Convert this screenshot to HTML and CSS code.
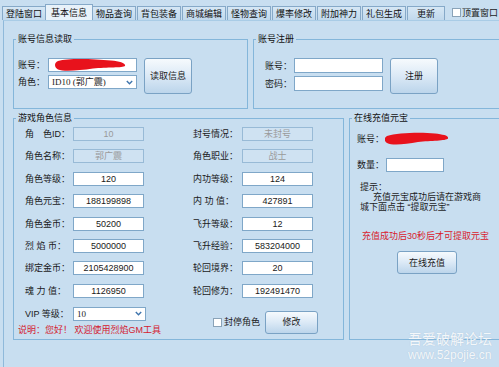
FILE: index.html
```html
<!DOCTYPE html>
<html lang="zh">
<head>
<meta charset="utf-8">
<title>GM工具</title>
<link rel="stylesheet" href="styles.css">
</head>
<body>
<div class="tabs">
  <div class="tab">登陆窗口</div>
  <div class="tab sel">基本信息</div>
  <div class="tab">物品查询</div>
  <div class="tab">背包装备</div>
  <div class="tab">商城编辑</div>
  <div class="tab">怪物查询</div>
  <div class="tab">爆率修改</div>
  <div class="tab">附加神力</div>
  <div class="tab">礼包生成</div>
  <div class="tab short">更新</div>
  <label class="chk top-chk"><span class="cb"></span>顶置窗口</label>
</div>

<div class="pane">
  <div class="row1">
    <div class="group">
      <div class="gtitle">账号信息读取</div>
      <div class="gbody g1">
        <div class="fields">
          <div class="frow"><span class="lbl l30">账号：</span><span class="input w89"><svg class="scribble" width="72" height="14" viewBox="0 0 72 14"><path d="M3,3 C14,0 38,1 56,2.5 C65,3.5 71,5 70,8 C68,10 52,9 38,10.5 C24,12.5 9,14 3,11.5 C-1,9.5 -1,4.5 3,3 Z"/></svg></span></div>
          <div class="frow"><span class="lbl l30">角色：</span><span class="combo w89">ID10 (郭广震)<svg class="chev" width="7" height="5" viewBox="0 0 7 5"><polyline points="0.8,1 3.5,3.8 6.2,1"/></svg></span></div>
        </div>
        <button class="btn b48">读取信息</button>
      </div>
    </div>
    <div class="group">
      <div class="gtitle">账号注册</div>
      <div class="gbody g2">
        <div class="fields">
          <div class="frow"><span class="lbl l29">账号：</span><span class="input w89 h15"></span></div>
          <div class="frow"><span class="lbl l29">密码：</span><span class="input w89 h15"></span></div>
        </div>
        <button class="btn b48">注册</button>
      </div>
    </div>
  </div>

  <div class="row2">
    <div class="group">
      <div class="gtitle">游戏角色信息</div>
      <div class="info">
        <span class="lbl">角　色ID：</span><span class="input dis">10</span><span></span>
        <span class="lbl">封号情况：</span><span class="input dis">未封号</span>

        <span class="lbl">角色名称：</span><span class="input dis">郭广震</span><span></span>
        <span class="lbl">角色职业：</span><span class="input dis">战士</span>

        <span class="lbl">角色等级：</span><span class="input">120</span><span></span>
        <span class="lbl">内功等级：</span><span class="input">124</span>

        <span class="lbl">角色元宝：</span><span class="input">188199898</span><span></span>
        <span class="lbl">内 功 值：</span><span class="input">427891</span>

        <span class="lbl">角色金币：</span><span class="input">50200</span><span></span>
        <span class="lbl">飞升等级：</span><span class="input">12</span>

        <span class="lbl">烈 焰 币：</span><span class="input">5000000</span><span></span>
        <span class="lbl">飞升经验：</span><span class="input">583204000</span>

        <span class="lbl">绑定金币：</span><span class="input">2105428900</span><span></span>
        <span class="lbl">轮回境界：</span><span class="input">20</span>

        <span class="lbl">魂 力 值：</span><span class="input">1126950</span><span></span>
        <span class="lbl">轮回修为：</span><span class="input">192491470</span>
      </div>
      <div class="bottom">
        <div class="bleft">
          <div class="frow vip"><span class="lbl l48">VIP 等级：</span><span class="combo w73">10<svg class="chev" width="7" height="5" viewBox="0 0 7 5"><polyline points="0.8,1 3.5,3.8 6.2,1"/></svg></span></div>
          <div class="note">说明：您好！ 欢迎使用烈焰GM工具</div>
        </div>
        <div class="bright">
          <label class="chk"><span class="cb"></span>封停角色</label>
          <button class="btn b53">修改</button>
        </div>
      </div>
    </div>

    <div class="group">
      <div class="gtitle">在线充值元宝</div>
      <div class="g4">
        <div class="frow r1"><span class="lbl l28">账号：</span><svg class="scribble" width="64" height="14" viewBox="0 0 64 14"><path d="M2,4 C12,1 34,0 50,1.5 C58,2.5 64,3.5 63,6.5 C61,9 46,8.5 33,10 C21,12 8,14 2,11 C-1,9 -1,5.5 2,4 Z"/></svg></div>
        <div class="frow r2"><span class="lbl l29">数量：</span><span class="input w58"></span></div>
        <div class="tip">提示：<br><span class="ind">充值元宝成功后请在游戏商</span><br>城下面点击 “提取元宝”</div>
        <div class="red">充值成功后30秒后才可提取元宝</div>
        <button class="btn b60">在线充值</button>
      </div>
    </div>
  </div>
</div>

<div class="wm">
  <div class="wm1">吾爱破解论坛</div>
  <div class="wm2">www.52pojie.cn</div>
</div>
</body>
</html>
```

FILE: styles.css
```css
* { box-sizing: border-box; }
html, body { margin: 0; padding: 0; }
body {
  width: 499px;
  height: 367px;
  overflow: hidden;
  position: relative;
  background: #c8def0;
  font-family: "Liberation Sans", "Noto Sans CJK SC", sans-serif;
  font-size: 9px;
  color: #1c1c1c;
}

/* tabs */
.tabs {
  display: flex;
  align-items: flex-end;
  height: 20px;
  padding-left: 2px;
}
.tab {
  flex: none;
  width: 44px;
  height: 14px;
  margin-right: 1px;
  border: 1px solid #86a9c8;
  border-bottom: none;
  background: linear-gradient(#d6e7f5, #c0d8ec);
  display: flex;
  align-items: center;
  justify-content: center;
  line-height: 12px;
  color: #111;
  white-space: nowrap;
}
.tab.sel {
  width: 48px;
  height: 16px;
  margin: 0 -1px 0 -2px;
  background: #e8f2fa;
  position: relative;
  z-index: 1;
}
.tab.short { width: 38px; }

.chk {
  display: flex;
  align-items: center;
  gap: 2px;
  line-height: 12px;
  white-space: nowrap;
  flex: none;
}
.top-chk { margin-left: 6px; height: 15px; gap: 1px; }
.cb {
  flex: none;
  width: 9px;
  height: 9px;
  background: #fff;
  border: 1px solid #8aa3b8;
}

/* pane */
.pane {
  margin-left: 3px;
  height: 347px;
  border-left: 1px solid #8fb9da;
  border-top: 1px solid #a9cce6;
  padding: 18px 0 0 9px;
}
.row1 {
  display: grid;
  grid-template-columns: 235px 250px;
  column-gap: 5px;
  height: 70px;
}
.row2 {
  display: grid;
  grid-template-columns: 331px 160px;
  column-gap: 5px;
  height: 222px;
  margin-top: 9px;
}
.group {
  border: 1px solid #84b6da;
}
.gtitle {
  width: fit-content;
  height: 12px;
  margin: -7px 0 0 2px;
  padding: 0 2px;
  line-height: 12px;
  background: #c8def0;
  color: #111;
}

/* generic fields */
.frow { display: flex; align-items: center; }
.fields { display: flex; flex-direction: column; gap: 3px; }
.lbl { line-height: 12px; white-space: nowrap; color: #1a1a1a; }
.l28 { width: 28px; }
.l29 { width: 29px; }
.l30 { width: 30px; }
.l48 { width: 48px; }
.input {
  display: flex;
  align-items: center;
  justify-content: center;
  height: 14px;
  background: #fff;
  border: 1px solid #7fa7c8;
  line-height: 12px;
  color: #1a1a1a;
  overflow: visible;
}
.input.dis {
  background: #cfe2f2;
  border-color: #98bad6;
  color: #9a9a9a;
}
.h15 { height: 15px; }
.w58 { width: 58px; }
.w73 { width: 73px; }
.w89 { width: 89px; }
.combo {
  display: flex;
  align-items: center;
  justify-content: space-between;
  height: 14px;
  padding: 0 3px 0 3px;
  background: #fff;
  border: 1px solid #7fa7c8;
  line-height: 12px;
  font-family: "Liberation Serif", "Noto Sans CJK SC", serif;
}
.chev polyline {
  fill: none;
  stroke: #3f75ad;
  stroke-width: 1.4;
}
.scribble path { fill: #e8121c; }
.input .scribble { margin-left: -4px; flex: none; }

.btn {
  display: flex;
  align-items: center;
  justify-content: center;
  padding: 0;
  border: 1px solid #7aa2c4;
  border-radius: 3px;
  background: linear-gradient(#f6fafd, #dbe9f6 50%, #bcd5eb);
  font: inherit;
  color: #1a1a1a;
  line-height: 12px;
}
.b48 { width: 48px; height: 36px; }
.b53 { width: 53px; height: 23px; }
.b60 { width: 60px; height: 23px; }

/* group 1/2 bodies */
.gbody {
  display: flex;
  align-items: flex-start;
  margin-top: 13px;
}
.gbody .btn { margin-left: 7px; }
.g1 { padding-left: 4px; }
.g2 { padding-left: 11px; }

/* game role info */
.info {
  display: grid;
  grid-template-columns: 48px 71px 49px 49px 71px;
  grid-auto-rows: 14px;
  row-gap: 8.4px;
  align-items: center;
  margin-top: 3px;
  padding-left: 11px;
}
.bottom {
  display: flex;
  align-items: flex-start;
  margin-top: 9px;
  padding-left: 4px;
}
.bleft { width: 195px; }
.vip { margin-left: 7px; }
.vip .combo { font-family: "Liberation Serif", serif; }
.note {
  margin-top: 3px;
  line-height: 12px;
  color: #d4202e;
  white-space: nowrap;
}
.bright {
  display: flex;
  align-items: center;
  margin-top: 4px;
}
.bright .btn { margin-left: 5px; }

/* recharge */
.g4 { padding-left: 7px; }
.g4 .r1 { margin-top: 8px; height: 14px; }
.g4 .r2 { margin-top: 12px; }
.tip {
  margin-top: 10px;
  padding-left: 3px;
  line-height: 10px;
  white-space: nowrap;
}
.tip .ind { padding-left: 13px; }
.red {
  margin-top: 19px;
  padding-left: 5px;
  line-height: 10px;
  color: #d9202c;
  white-space: nowrap;
}
.g4 .btn { margin: 10px 0 0 40px; }

/* watermark */
.wm {
  position: absolute;
  left: 408px;
  top: 329px;
  color: rgba(255, 255, 255, 0.88);
  text-shadow: 0 0 1px rgba(120, 150, 180, 0.4);
}
.wm1 { font-size: 14px; line-height: 18px; font-family: "Noto Sans CJK SC", sans-serif; }
.wm2 { font-size: 12px; line-height: 16px; font-family: "Liberation Sans", sans-serif; }
```
